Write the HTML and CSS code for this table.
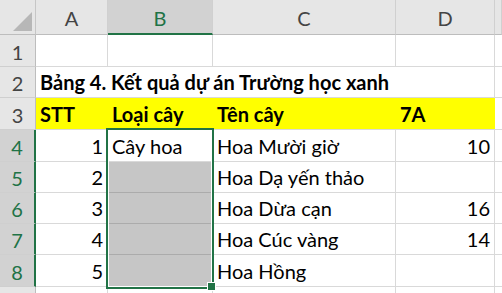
FILE: index.html
```html
<!DOCTYPE html>
<html lang="vi">
<head>
    <meta charset="UTF-8">
    <title>Trường học xanh</title>
    <link rel="stylesheet" href="styles.css">
</head>
<body>
    <div class="sheet">
        <!-- tiêu đề cột -->
        <div class="corner"><span class="tri"></span></div>
        <div class="colhead">A</div>
        <div class="colhead picked">B</div>
        <div class="colhead">C</div>
        <div class="colhead">D</div>
        <div class="colhead edge"></div>

        <!-- dòng 1 -->
        <div class="rowhead">1</div>
        <div class="cell"></div><div class="cell"></div><div class="cell"></div><div class="cell"></div><div class="cell edge"></div>

        <!-- dòng 2 -->
        <div class="rowhead">2</div>
        <div class="cell title">Bảng 4. Kết quả dự án Trường học xanh</div>
        <div class="cell noline"></div><div class="cell noline"></div><div class="cell"></div><div class="cell edge"></div>

        <!-- dòng 3 -->
        <div class="rowhead">3</div>
        <div class="cell head">STT</div>
        <div class="cell head">Loại cây</div>
        <div class="cell head">Tên cây</div>
        <div class="cell head">7A</div>
        <div class="cell edge"></div>

        <div class="rowhead picked">4</div>
        <div class="cell num">1</div>
        <div class="cell">Cây hoa</div>
        <div class="cell">Hoa Mười giờ</div>
        <div class="cell num">10</div>
        <div class="cell edge"></div>

        <div class="rowhead picked">5</div>
        <div class="cell num">2</div>
        <div class="cell shade"></div>
        <div class="cell">Hoa Dạ yến thảo</div>
        <div class="cell num"></div>
        <div class="cell edge"></div>

        <div class="rowhead picked">6</div>
        <div class="cell num">3</div>
        <div class="cell shade"></div>
        <div class="cell">Hoa Dừa cạn</div>
        <div class="cell num">16</div>
        <div class="cell edge"></div>

        <div class="rowhead picked">7</div>
        <div class="cell num">4</div>
        <div class="cell shade"></div>
        <div class="cell">Hoa Cúc vàng</div>
        <div class="cell num">14</div>
        <div class="cell edge"></div>

        <div class="rowhead picked">8</div>
        <div class="cell num">5</div>
        <div class="cell shade"></div>
        <div class="cell">Hoa Hồng</div>
        <div class="cell num"></div>
        <div class="cell edge"></div>

        <div class="rowhead"></div>
        <div class="cell"></div><div class="cell"></div><div class="cell"></div><div class="cell"></div><div class="cell edge"></div>

        <!-- vùng chọn B4:B8 -->
        <div class="selection"><span class="handle"></span></div>
    </div>
</body>
</html>
```

FILE: styles.css
```css
body, html {
    margin: 0;
    padding: 0;
    background: #ffffff;
    font-family: Lato, "Open Sans", sans-serif;
}
.sheet {
    position: relative;
    display: grid;
    grid-template-columns: 36px 72px 105px 183px 99px 7px;
    grid-template-rows: 35px 32px 31px 32px 32px 31px 31px 31px 32px 10px;
    width: 502px;
    height: 293px;
    overflow: hidden;
}
.corner {
    position: relative;
    background: #e6e6e6;
    border-right: 1px solid #c6c6c6;
    border-bottom: 1px solid #bdbdbd;
    box-sizing: border-box;
}
.tri {
    position: absolute;
    right: 3px;
    bottom: 3px;
    width: 0;
    height: 0;
    border-left: 19px solid transparent;
    border-bottom: 19px solid #b7b7b7;
}
.colhead {
    display: flex;
    align-items: center;
    justify-content: center;
    padding-top: 2px;
    background: #e6e6e6;
    color: #444444;
    font-size: 20px;
    border-right: 1px solid #d0d0d0;
    border-bottom: 1px solid #bdbdbd;
    box-sizing: border-box;
}
.colhead.picked {
    background: #d2d2d2;
    color: #217346;
    border-bottom: 2px solid #217346;
}
.rowhead {
    display: flex;
    align-items: flex-end;
    justify-content: center;
    padding-bottom: 2px;
    background: #e6e6e6;
    color: #444444;
    font-size: 20px;
    border-right: 1px solid #bdbdbd;
    border-bottom: 1px solid #cfcfcf;
    box-sizing: border-box;
}
.rowhead.picked {
    background: #d2d2d2;
    color: #217346;
    border-right: 2px solid #217346;
}
.cell {
    display: flex;
    align-items: flex-end;
    padding: 0 0 3px 4px;
    color: #000000;
    font-size: 20px;
    white-space: nowrap;
    border-right: 1px solid #d9d9d9;
    border-bottom: 1px solid #d9d9d9;
    box-sizing: border-box;
    min-width: 0;
}
.cell.noline {
    border-right: none;
}
.cell.title {
    overflow: visible;
    border-right: none;
    font-weight: bold;
    z-index: 1;
}
.cell.head {
    background: #ffff00;
    font-weight: bold;
    border-right: none;
}
.cell.num {
    justify-content: flex-end;
    padding-right: 4px;
}
.cell.shade {
    background: #c6c6c6;
    border-bottom-color: #ababab;
}
.cell.edge {
    border-right: none;
}
.selection {
    position: absolute;
    left: 106px;
    top: 128px;
    width: 108px;
    height: 161px;
    border: 2px solid #217346;
    box-shadow: inset 0 0 0 1px #ffffff;
    box-sizing: border-box;
    pointer-events: none;
}
.handle {
    position: absolute;
    right: -4px;
    bottom: -4px;
    width: 7px;
    height: 7px;
    background: #217346;
    border: 1px solid #ffffff;
}
```
